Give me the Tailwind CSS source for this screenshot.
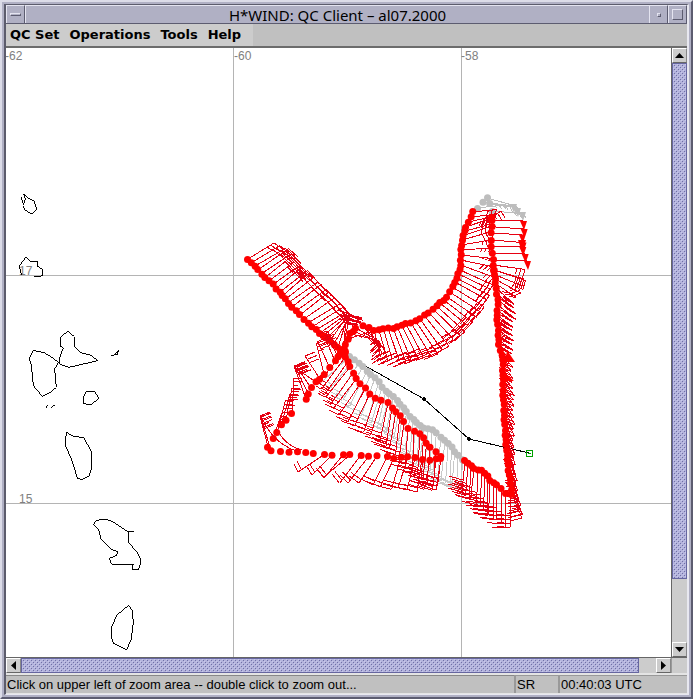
<!DOCTYPE html>
<html lang="en">
<head>
<meta charset="utf-8">
<title>H*WIND: QC Client – al07.2000</title>
<script src="https://cdn.jsdelivr.net/npm/@tailwindcss/browser@4"></script>
</head>
<body class="h-screen overflow-hidden">
<div class="flex h-full flex-col border-2 border-t-[#dcdce8] border-l-[#dcdce8] border-r-[#5c5c70] border-b-[#5c5c70] bg-[#b0b0c4] p-[2px] font-['DejaVu_Sans',sans-serif] text-black">
  <div class="flex min-h-0 flex-1 flex-col border-x-2 border-y border-t-[#5c5c6c] border-l-[#5c5c6c] border-r-[#e8e8f0] border-b-[#e8e8f0]">

    <header class="flex h-[19px] shrink-0 items-stretch border-b border-[#5c5c70] bg-[#b0b0c4]">
      <button aria-label="Window menu" class="flex w-[19px] items-center justify-center border-t border-r border-l border-t-[#e4e4f0] border-l-[#e4e4f0] border-r-[#5c5c70]">
        <span class="h-[3px] w-[11px] border border-t-[#e4e4f0] border-l-[#e4e4f0] border-r-[#5c5c70] border-b-[#5c5c70]"></span>
      </button>
      <h1 class="flex-1 border-t border-l border-[#e4e4f0] text-center font-['Noto_Sans',sans-serif] text-[15px] leading-[18px]">H*WIND: QC Client – al07.2000</h1>
      <button aria-label="Minimize" class="flex w-[19px] items-center justify-center border-t border-r border-l border-t-[#e4e4f0] border-l-[#e4e4f0] border-r-[#5c5c70]">
        <span class="size-[4px] border border-t-[#e4e4f0] border-l-[#e4e4f0] border-r-[#5c5c70] border-b-[#5c5c70]"></span>
      </button>
      <button aria-label="Maximize" class="flex w-[19px] items-center justify-center border-t border-r border-l border-t-[#e4e4f0] border-l-[#e4e4f0] border-r-[#5c5c70]">
        <span class="size-[11px] border border-t-[#e4e4f0] border-l-[#e4e4f0] border-r-[#5c5c70] border-b-[#5c5c70]"></span>
      </button>
    </header>

    <nav class="flex h-[24px] shrink-0 border-b-2 border-[#6c6c6c] bg-[#c0c0c0] text-[13px] leading-[20px] font-bold">
      <div class="flex gap-[10px] bg-[#cccccc] pr-[12px] pl-1">
        <button>QC Set</button>
        <button>Operations</button>
        <button>Tools</button>
        <button>Help</button>
      </div>
    </nav>

    <main class="flex min-h-0 flex-1 flex-col">
      <div class="flex min-h-0 flex-1">
        <svg id="map" class="block h-full min-w-0 flex-1 bg-white" role="img" aria-label="Wind observations">
          <g id="plot" transform="translate(-6 -48)">
            <g stroke="#b4b4b4" shape-rendering="crispEdges">
              <path d="M233.5 0V2000M461.5 0V2000M0 275.5H3000M0 503.5H3000"/>
            </g>
            <g fill="#808080" font-family="Liberation Sans" font-size="12">
              <text x="5" y="60">-62</text><text x="234" y="60">-60</text><text x="461" y="60">-58</text>
              <text x="19" y="275">17</text><text x="19" y="503">15</text>
            </g>
            <g fill="none" stroke="#000" stroke-width="3" shape-rendering="crispEdges">
              <g transform="translate(0 180) scale(.3333)">
                <path d="M64 52l6 22 6-18-5-14 14 13 18 9 7 23-13 16-22-13-5-12"/>
                <path d="M64 284l-6-26 19-26 17 13h20v15l12 7 2 18-10 5H103"/>
                <path d="M203 454l20 16v28l20 20 30 8 20 16-86 20-28-9-1-7 3-20 9-21-9-7v-26zM100 511l32 7 24 14 19 15-11 20 5 55-17 15-25 12-27-32-6-60-6-23z"/>
                <path d="M333 526l18-2 6-14-13 12M259 634h25l12 21-22 19-24-3v-18zM139 683l3-8M154 682l10-6"/>
              </g>
              <g transform="translate(0 410) scale(.3333)">
                <path d="M199 67l20 11 32 5 24 42-1 52-7 21-22 12-13-6-15-50-21-48z"/>
                <path d="M280 344l10-13 24-4 23 7 45 30h20-16v34l25 28 9 18 1 18-5 16h-19v-11l4-4h-6l-61-1-6-17 20-8 7-11-21-8-31-31-7-28z"/>
                <path d="M386 586l11 17 3 34-6 50-14 33-40-20-6-20 2-31 14-33z"/>
              </g>
            </g>
            <path d="M346 355l78 44 45 40 60 14" fill="none" stroke="#000" shape-rendering="crispEdges"/>
            <path d="M422 399l2-2 2 2-2 2zM467 439l2-2 2 2-2 2z" stroke="#000"/>
          </g>
        </svg>
        <div class="flex w-[16px] flex-col border-l border-[#666] bg-[#cccccc]">
          <button aria-label="Scroll up" class="flex h-[15px] items-center justify-center border border-t-white border-l-white border-r-[#888] border-b-[#666]">
            <svg width="9" height="5"><path d="M4.500 0L9 5H0z"/></svg>
          </button>
          <div role="scrollbar" aria-label="Vertical" aria-controls="map" aria-valuenow="0" aria-orientation="vertical" class="flex-1 pb-[63px]">
            <svg class="block h-full w-full border border-[#6666a0] bg-[#b4b4dc]"><rect width="100%" height="100%" fill="url(#dots)"/></svg>
          </div>
          <button aria-label="Scroll down" class="flex h-[15px] items-center justify-center border border-t-white border-l-white border-r-[#888] border-b-[#666]">
            <svg width="9" height="5"><path d="M0 0H9L4.500 5z"/></svg>
          </button>
        </div>
      </div>
      <div class="flex h-[16px] shrink-0 border-t border-[#666] bg-[#cccccc]">
        <button aria-label="Scroll left" class="flex w-[15px] items-center justify-center border border-t-white border-l-white border-r-[#888] border-b-[#666]">
          <svg width="5" height="9"><path d="M5 0V9L0 4.500z"/></svg>
        </button>
        <div role="scrollbar" aria-label="Horizontal" aria-controls="map" aria-valuenow="0" aria-orientation="horizontal" class="flex-1 pr-[17px]">
          <svg class="block h-full w-full border border-[#6666a0] bg-[#b4b4dc]">
            <defs><pattern id="dots" width="4" height="4" patternUnits="userSpaceOnUse"><path d="M1 1h1v1h-1zM3 3h1v1h-1z" fill="#7070a8"/><path d="M0 0h1v1h-1zM2 2h1v1h-1z" fill="#c8c8ec"/></pattern></defs>
            <rect width="100%" height="100%" fill="url(#dots)"/>
          </svg>
        </div>
        <button aria-label="Scroll right" class="flex w-[15px] items-center justify-center border border-t-white border-l-white border-r-[#888] border-b-[#666]">
          <svg width="5" height="9"><path d="M0 0V9L5 4.500z"/></svg>
        </button>
        <div class="w-[16px] border-l border-[#999]"></div>
      </div>
    </main>

    <footer class="flex h-[21px] shrink-0 border-t-2 border-b border-t-[#e4e4e4] border-b-[#e4e4e4] bg-[#c0c0c0] font-['Liberation_Sans',sans-serif] text-[13px] leading-[17px]">
      <p class="flex-1 border-t border-[#888] pl-px">Click on upper left of zoom area -- double click to zoom out...</p>
      <p class="w-[44px] border-t border-l-2 border-[#999] pl-px">SR</p>
      <p class="w-[129px] border-t border-l-2 border-[#999] pl-px">00:40:03 UTC</p>
    </footer>
  </div>
</div>

<script>
const NS = 'http://www.w3.org/2000/svg', plot = document.getElementById('plot');
const RED = '#ff0000', BARB = '#e60012', GREY = '#bdbdbd';
function add(tag, attrs) {
  const e = document.createElementNS(NS, tag);
  for (const k in attrs) e.setAttribute(k, attrs[k]);
  plot.appendChild(e);
}
// Anchor: [x, y, shaftX, shaftY, featherX, featherY, pennant]
function flight(anchors, steps, colour, barb, feathers = 3) {
  let d = '', pennants = '', pts = [], n = 0;
  const put = a => {
    const [x, y, sx, sy, fx, fy, pn] = a, len = Math.hypot(sx, sy) || 1;
    const wob = ((n * 7) % 5 - 2) / 2; n++;
    pts.push([x + wob * .5, y + ((n * 3) % 4 - 1.500) * .4]);
    if (!sx && !sy) return;
    const ex = x + sx + wob, ey = y + sy + wob;
    d += `M${x} ${y}L${ex} ${ey}`;
    if (pn > .5) { pennants += `M${ex - 3} ${ey}h7l-3 9z`; return; }
    for (let k = 0; k < feathers; k++) {
      const bx = ex - sx / len * 4 * k, by = ey - sy / len * 4 * k, f = k === 2 && n % 2 ? .6 : 1;
      d += `M${bx} ${by}l${fx * f} ${fy * f}`;
    }
  };
  for (let i = 0; i < anchors.length - 1; i++) {
    const a = anchors[i], b = anchors[i + 1];
    const m = steps ? Math.max(1, Math.round(Math.hypot(b[0] - a[0], b[1] - a[1]) / steps)) : 1;
    for (let j = 0; j < m; j++) put(a.map((v, q) => v + ((b[q] || 0) - v) * j / m));
  }
  put(anchors[anchors.length - 1]);
  add('path', { d, fill: 'none', stroke: barb, 'shape-rendering': 'crispEdges' });
  if (pennants) add('path', { d: pennants, fill: colour });
  for (const [cx, cy] of pts) add('circle', { cx, cy, r: 3.5, fill: colour });
}
flight([[350,356,-26,26,-5,-4],[363,367,-20,34,-8,-4],[375,378,-14,38,-9,-4],[386,391,-9,36,-10,-4],[397,400,-6,34,-10,-4],[410,416,-5,34,-10,-4],[420,426,-4,38,-10,-4],[432,430,-3,40,-10,-3],[445,440,-3,42,-11,-3],[458,455,-2,33,-12,-3],[463,460,-2,30,-12,-3]], 5, GREY, '#c8c8c8', 2);
flight([[478,208,26,-2,3,4],[483,202,30,4,3,5],[487,198,28,7,3,5],[490,204,28,4,3,6],[492,211,30,2,4,5]], 0, GREY, GREY);
add('path', { d: 'M510 204h7l-3 9zM514 208h7l-3 9zM519 212h7l-3 9z', fill: GREY });
flight([[248,259,27,-15,10,7],[258,270,31,-21,10,9],[269,281,25,-19,10,11],[280,292,27,-22,10,11],[288,303,29,-22,10,11],[300,315,30,-22,11,11],[312,327,31,-19,12,11],[320,333,29,-19,12,6],[330,341,18,-25,14,3],[342,350,8,-34,12,2]], 5, RED, BARB);
flight([[343,350,5,-36,-9,-3],[350,334,26,6,8,8],[356,328,24,14,5,9],[363,326,18,20,-8,8],[374,330,7,28,-8,6],[393,328,12,33,-13,5],[406,324,18,33,-14,5],[420,319,23,32,-14,6],[433,309,27,26,-11,9],[447,297,29,20,-9,11],[455,282,32,18,-8,11],[460,270,33,15,-6,9],[461,255,31,3,-4,2],[462,240,27,-9,4,8],[466,227,24,-7,-4,8],[473,212,24,-2,-3,8]], 5, RED, BARB);
flight([[492,217,10,-5,4,7,0],[492,220,31,1,-2,9,1],[491,240,31,2,-2,9,1],[493,260,33,0,-3,9,1],[494,270,31,10,-3,10,0]], 6, RED, BARB);
flight([[494,270,31,10,-3,10],[496,288,18,16,-9,-5],[498,300,18,14,-9,-5],[497,315,16,12,-9,-4],[498,330,15,10,-9,-3],[499,345,14,10,-9,-4],[503,360,9,12,-9,-4],[503,390,11,16,-9,-4],[505,430,9,24,-8,-3],[508,465,9,25,-10,0],[512,494,11,25,-12,3]], 5, RED, BARB);
add('path', { d: 'M507 350l8 12h-10zM506 374l8 7h-9zM518 240l8 0-4 12z', fill: RED });
flight([[343,352,-24,33,-4,-3],[350,367,-24,31,-7,-4],[360,384,-21,31,-10,-5],[375,398,-12,34,-15,-5],[388,403,-8,38,-15,-5],[400,416,-5,38,-15,-5],[408,428,-3,40,-15,-4],[420,434,-2,42,-14,-4],[430,447,-3,36,-14,-4],[441,457,-3,30,-14,-4]], 6, RED, BARB);
flight([[465,460,-2,33,-14,-4],[474,469,-3,31,-14,-4],[482,470,-1,38,-14,-2],[490,480,-1,36,-14,-2],[497,485,0,36,-14,-2],[505,493,0,34,-14,-1],[511,494,0,34,-13,-1]], 5, RED, BARB, 4);
flight([[281,451,0,0,0,0],[289,452,0,0,0,0],[297,452,0,0,0,0],[306,453,0,0,0,0],[313,453,0,0,0,0]], 0, RED, BARB);
flight([[325,454,-26,19,-4,-8],[332,455,-20,20,-5,-8],[343,455,-20,22,-6,-8],[350,455,-26,23,-7,-9],[361,455,-22,28,-7,-9],[369,456,-20,28,-8,-8],[377,456,-18,27,-10,-7],[387,457,-15,27,-12,-6],[394,458,-13,29,-14,-5],[401,457,-10,32,-15,-4],[408,457,-9,32,-15,-4],[415,458,-8,32,-15,-4],[422,459,-6,32,-15,-4],[430,460,-5,30,-15,-5],[436,459,-4,31,-15,-5],[441,459,-4,32,-15,-5]], 0, RED, BARB, 2);
flight([[341,352,-13,-20,-9,3],[335,361,-11,-24,9,-4],[330,368,-12,-26,10,-4],[324,374,-8,-31,10,-4],[320,379,-14,-22,10,-4],[316,382,-22,-15,11,-4],[311,388,-15,-22,10,-4],[306,399,-12,-32,11,-5]], 6, RED, BARB);
flight([[292,413,3,-34,8,0],[286,420,6,-32,8,0],[281,425,8,-32,8,0],[277,433,9,-32,8,0],[273,438,10,-30,8,0],[268,447,-7,-30,10,-4],[271,451,-10,-34,10,-4]], 0, RED, BARB, 4);
add('path', { d: 'M262 418q10 24 34 33M278 430q6 15 24 20', fill: 'none', stroke: BARB, 'shape-rendering': 'crispEdges' });
add('circle', { cx: 343, cy: 352, r: 6, fill: RED });
add('path', { d: 'M526.500 450.500h6v6h-6zM528 453.500h3', fill: 'none', stroke: '#00a000', 'shape-rendering': 'crispEdges' });
</script>
</body>
</html>
